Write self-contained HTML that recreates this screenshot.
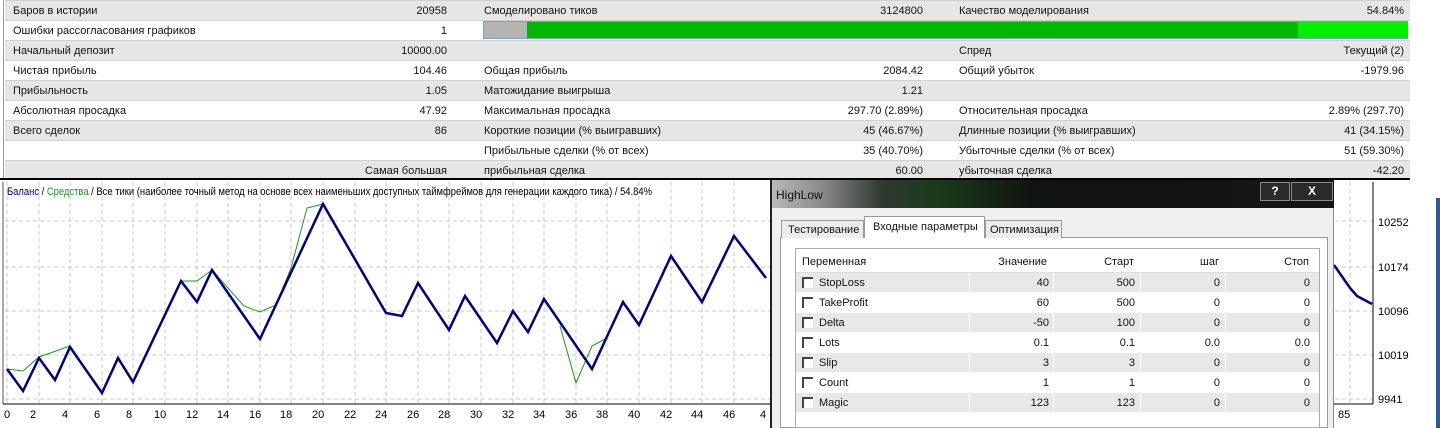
<!DOCTYPE html>
<html><head><meta charset="utf-8"><style>
*{margin:0;padding:0;box-sizing:border-box}
body{width:1440px;height:428px;overflow:hidden;background:#fff;font-family:"Liberation Sans","DejaVu Sans",sans-serif;font-size:11px;color:#111;position:relative}
.r{position:absolute;left:5px;width:1405px;height:20px}
.g{background:#e6e6e6;border-top:1px solid #d0d0d0}
.w{background:#fff;border-top:1px solid #d0d0d0}
.t{position:absolute;top:4px;white-space:nowrap}
.v{position:absolute;top:4px;text-align:right;white-space:nowrap}
.a{position:absolute;white-space:nowrap}
</style></head><body>
<div class="r g" style="top:0"><span class="t" style="left:8px">Баров в истории</span><span class="v" style="right:963px">20958</span><span class="t" style="left:479px">Смоделировано тиков</span><span class="v" style="right:487px">3124800</span><span class="t" style="left:954px">Качество моделирования</span><span class="v" style="right:6px">54.84%</span></div>
<div class="r w" style="top:20px"><span class="t" style="left:8px">Ошибки рассогласования графиков</span><span class="v" style="right:963px">1</span></div>
<div style="position:absolute;left:483px;top:21px;width:925px;height:18px;border:1px solid #7aa0c0;background:#00b800">
<div style="position:absolute;left:0;top:0;width:43px;height:16px;background:#b4b4b4"></div>
<div style="position:absolute;left:814px;top:0;width:110px;height:16px;background:#00f000"></div></div>
<div class="r g" style="top:40px"><span class="t" style="left:8px">Начальный депозит</span><span class="v" style="right:963px">10000.00</span><span class="t" style="left:954px">Спред</span><span class="v" style="right:6px">Текущий (2)</span></div>
<div class="r w" style="top:60px"><span class="t" style="left:8px">Чистая прибыль</span><span class="v" style="right:963px">104.46</span><span class="t" style="left:479px">Общая прибыль</span><span class="v" style="right:487px">2084.42</span><span class="t" style="left:954px">Общий убыток</span><span class="v" style="right:6px">-1979.96</span></div>
<div class="r g" style="top:80px"><span class="t" style="left:8px">Прибыльность</span><span class="v" style="right:963px">1.05</span><span class="t" style="left:479px">Матожидание выигрыша</span><span class="v" style="right:487px">1.21</span></div>
<div class="r w" style="top:100px"><span class="t" style="left:8px">Абсолютная просадка</span><span class="v" style="right:963px">47.92</span><span class="t" style="left:479px">Максимальная просадка</span><span class="v" style="right:487px">297.70 (2.89%)</span><span class="t" style="left:954px">Относительная просадка</span><span class="v" style="right:6px">2.89% (297.70)</span></div>
<div class="r g" style="top:120px"><span class="t" style="left:8px">Всего сделок</span><span class="v" style="right:963px">86</span><span class="t" style="left:479px">Короткие позиции (% выигравших)</span><span class="v" style="right:487px">45 (46.67%)</span><span class="t" style="left:954px">Длинные позиции (% выигравших)</span><span class="v" style="right:6px">41 (34.15%)</span></div>
<div class="r w" style="top:140px"><span class="t" style="left:479px">Прибыльные сделки (% от всех)</span><span class="v" style="right:487px">35 (40.70%)</span><span class="t" style="left:954px">Убыточные сделки (% от всех)</span><span class="v" style="right:6px">51 (59.30%)</span></div>
<div class="r g" style="top:160px"><span class="v" style="right:963px">Самая большая</span><span class="t" style="left:479px">прибыльная сделка</span><span class="v" style="right:487px">60.00</span><span class="t" style="left:954px">убыточная сделка</span><span class="v" style="right:6px">-42.20</span></div>
<div style="position:absolute;left:0;top:0;width:4px;height:178px;background:#fff;border-right:1px solid #999"></div>

<svg style="position:absolute;left:0;top:178px" width="1440" height="250">
<rect x="0" y="0" width="1410" height="2" fill="#000"/>
<rect x="1436" y="20" width="4" height="230" fill="#2a5a9a"/>
<g stroke="#c8c8c8" stroke-dasharray="4,3" stroke-width="1">
<line x1="5" y1="43" x2="1372" y2="43"/><line x1="5" y1="89" x2="1372" y2="89"/><line x1="5" y1="133" x2="1372" y2="133"/><line x1="5" y1="177" x2="1372" y2="177"/><line x1="5" y1="221" x2="1372" y2="221"/>
<line x1="7" y1="4" x2="7" y2="226"/><line x1="39" y1="4" x2="39" y2="226"/><line x1="70" y1="4" x2="70" y2="226"/><line x1="102" y1="4" x2="102" y2="226"/><line x1="133" y1="4" x2="133" y2="226"/><line x1="165" y1="4" x2="165" y2="226"/><line x1="197" y1="4" x2="197" y2="226"/><line x1="228" y1="4" x2="228" y2="226"/><line x1="260" y1="4" x2="260" y2="226"/><line x1="291" y1="4" x2="291" y2="226"/><line x1="323" y1="4" x2="323" y2="226"/><line x1="355" y1="4" x2="355" y2="226"/><line x1="386" y1="4" x2="386" y2="226"/><line x1="418" y1="4" x2="418" y2="226"/><line x1="449" y1="4" x2="449" y2="226"/><line x1="481" y1="4" x2="481" y2="226"/><line x1="513" y1="4" x2="513" y2="226"/><line x1="544" y1="4" x2="544" y2="226"/><line x1="576" y1="4" x2="576" y2="226"/><line x1="607" y1="4" x2="607" y2="226"/><line x1="639" y1="4" x2="639" y2="226"/><line x1="671" y1="4" x2="671" y2="226"/><line x1="702" y1="4" x2="702" y2="226"/><line x1="734" y1="4" x2="734" y2="226"/><line x1="1350" y1="4" x2="1350" y2="226"/>
</g>
<line x1="3" y1="4" x2="3" y2="226" stroke="#555"/>
<line x1="1373" y1="4" x2="1373" y2="226" stroke="#000"/>
<line x1="3" y1="226" x2="1373" y2="226" stroke="#000"/>
<polyline fill="none" stroke="#1a9a1a" stroke-width="1" points="7,191 23,193 39,179 70,168 102,215 118,180 133,204 181,103 197,103 212,92 244,128 260,134 276,127 291,90 307,30 323,26"/>
<polyline fill="none" stroke="#1a9a1a" stroke-width="1" points="560,148 576,205 592,168 607,160"/>
<polyline fill="none" stroke="#000080" stroke-width="2.5" points="7,191 23,213 39,180 55,202 70,169 102,215 118,180 133,204 181,103 197,124 212,92 260,161 323,26 386,135 402,138 418,105 449,152 465,118 497,165 513,133 528,154 544,121 592,191 623,124 639,147 671,78 702,124 734,58 766,100"/>
<polyline fill="none" stroke="#000080" stroke-width="2.5" points="1334,87 1350,110 1357,118 1372,126"/>
<g font-size="11" fill="#000" font-family="Liberation Sans,sans-serif">
<text x="1378" y="48">10252</text><text x="1378" y="93">10174</text><text x="1378" y="137">10096</text><text x="1378" y="181">10019</text><text x="1378" y="225">9941</text>
<text x="4" y="240">0</text><text x="30" y="240">2</text><text x="62" y="240">4</text><text x="94" y="240">6</text><text x="126" y="240">8</text><text x="154" y="240">10</text><text x="186" y="240">12</text><text x="217" y="240">14</text><text x="249" y="240">16</text><text x="280" y="240">18</text><text x="312" y="240">20</text><text x="344" y="240">22</text><text x="375" y="240">24</text><text x="407" y="240">26</text><text x="438" y="240">28</text><text x="470" y="240">30</text><text x="502" y="240">32</text><text x="533" y="240">34</text><text x="565" y="240">36</text><text x="596" y="240">38</text><text x="628" y="240">40</text><text x="660" y="240">42</text><text x="691" y="240">44</text><text x="723" y="240">46</text><text x="760" y="240">4</text><text x="1338" y="240">85</text>
<text x="7" y="17" font-size="11" textLength="645" lengthAdjust="spacingAndGlyphs"><tspan fill="#000080">Баланс</tspan> / <tspan fill="#1a9a1a">Средства</tspan> / Все тики (наиболее точный метод на основе всех наименьших доступных таймфреймов для генерации каждого тика) / 54.84%</text>
</g>
</svg>

<div style="position:absolute;left:770px;top:180px;width:564px;height:248px;background:#f0f0f0;border-left:2px solid #222;border-right:1px solid #888">
<div style="position:absolute;left:0;top:0;width:562px;height:28px;background:linear-gradient(90deg,#b8b8b8 0,#8a8a8a 50px,#303830 110px,#1a3a1a 170px,#101410 260px,#151515 100%)"></div>
<div class="a" style="left:4px;top:8px;font-size:12px;color:#111">HighLow</div>
<div style="position:absolute;left:488px;top:2px;width:30px;height:19px;background:#2a2a2a;border:1px solid #888;color:#fff;font-weight:bold;text-align:center;font-size:12px;line-height:17px">?</div>
<div style="position:absolute;left:519px;top:2px;width:42px;height:19px;background:#2a2a2a;border:1px solid #888;color:#fff;font-weight:bold;text-align:center;font-size:12px;line-height:17px">X</div>
<div style="position:absolute;left:8px;top:57px;width:548px;height:191px;border:1px solid #999;background:#fff"></div>
<div class="a" style="left:9px;top:40px;width:83px;height:18px;border:1px solid #999;border-bottom:none;background:#ececec;padding:3px 0 0 6px">Тестирование</div>
<div class="a" style="left:92px;top:36px;width:121px;height:22px;border:1px solid #999;border-bottom:none;background:#fff;padding:4px 0 0 8px">Входные параметры</div>
<div class="a" style="left:213px;top:40px;width:77px;height:18px;border:1px solid #999;border-bottom:none;background:#ececec;padding:3px 0 0 4px">Оптимизация</div>
<div style="position:absolute;left:23px;top:68px;width:525px;height:180px;border:1px solid #aaa;background:#fff;overflow:hidden">
<div style="position:relative;height:24px;background:#fff;border-bottom:1px solid #ddd"><span class="a" style="left:6px;top:7px">Переменная</span><span class="a" style="right:272px;top:7px">Значение</span><span class="a" style="right:185px;top:7px">Старт</span><span class="a" style="right:100px;top:7px">шаг</span><span class="a" style="right:10px;top:7px">Стоп</span></div>
<div id="rows"></div>
</div>
</div>
<script>
var d=[["StopLoss","40","500","0","0"],["TakeProfit","60","500","0","0"],["Delta","-50","100","0","0"],["Lots","0.1","0.1","0.0","0.0"],["Slip","3","3","0","0"],["Count","1","1","0","0"],["Magic","123","123","0","0"]];
var h="";d.forEach(function(r,i){var bg=i%2?"#fff":"#e8e8e8";
h+='<div style="position:relative;height:20px;background:'+bg+';border-bottom:1px solid #fff">'+
'<span style="position:absolute;left:173px;top:0;width:1px;height:20px;background:#fff"></span><span style="position:absolute;left:257px;top:0;width:1px;height:20px;background:#fff"></span><span style="position:absolute;left:344px;top:0;width:1px;height:20px;background:#fff"></span><span style="position:absolute;left:429px;top:0;width:1px;height:20px;background:#fff"></span>'+
'<span style="position:absolute;left:6px;top:4px;width:11px;height:11px;border-left:2px solid #444;border-top:2px solid #444;background:#fff"></span>'+
'<span class="a" style="left:23px;top:4px">'+r[0]+'</span><span class="a" style="right:270px;top:4px">'+r[1]+'</span><span class="a" style="right:184px;top:4px">'+r[2]+'</span><span class="a" style="right:99px;top:4px">'+r[3]+'</span><span class="a" style="right:9px;top:4px">'+r[4]+'</span></div>';});
document.getElementById("rows").innerHTML=h;
</script>
</body></html>
